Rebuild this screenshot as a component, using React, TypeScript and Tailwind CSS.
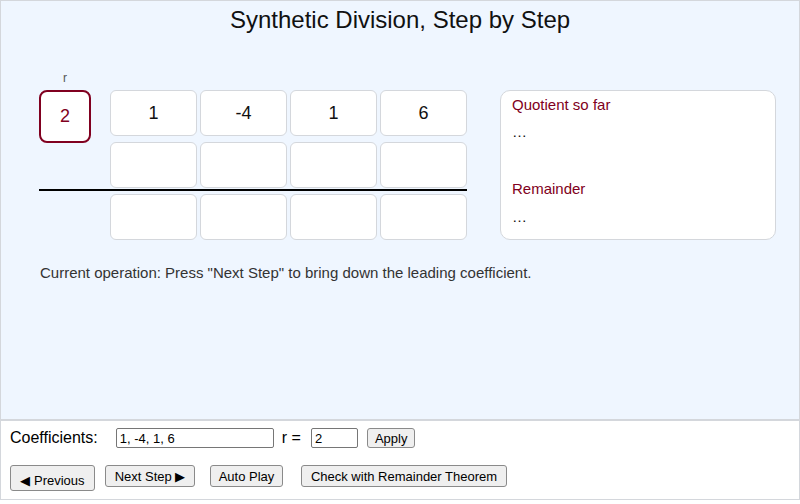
const coefficients = ['1', '-4', '1', '6']
const emptyRow = ['', '', '', '']

const Cell = ({ value }: { value: string }) => (
  <div className="flex h-[46px] w-[87px] items-center justify-center rounded-[6px] border border-[#d4d7dc] bg-white text-[18px] text-[#111]">
    {value}
  </div>
)

const CellRow = ({ values }: { values: string[] }) => (
  <div className="grid grid-cols-[87px_87px_87px_87px] gap-[3px]">
    {values.map((v, i) => (
      <Cell key={i} value={v} />
    ))}
  </div>
)

const Btn = ({ label, className }: { label: string; className?: string }) => (
  <button
    className={
      'rounded-[3px] border border-[#8a8a8a] bg-[#efefef] px-[7px] text-[13px] leading-[15px] text-black ' +
      (className ?? '')
    }
  >
    {label}
  </button>
)

const App = () => {
  return (
    <div className="h-[504px] w-[800px] bg-white font-['Liberation_Sans',Arial,sans-serif]">
      <div className="h-[420px] border border-[#d4d7dc] bg-[#eff6ff]">
        <h1 className="pt-[5px] text-center text-[24px] leading-[28px] text-[#111]">
          Synthetic Division, Step by Step
        </h1>

        <div className="mt-[37px] flex items-start">
          <div className="ml-[38px] w-[428px]">
            <div className="w-[52px] text-center text-[12px] leading-[14px] text-[#555]">r</div>
            <div className="mt-[5px] flex h-[46px] items-start">
              <div className="flex h-[53px] w-[52px] shrink-0 items-center justify-center rounded-[8px] border-2 border-[#800020] bg-white text-[18px] text-[#800020]">
                2
              </div>
              <div className="ml-[19px]">
                <CellRow values={coefficients} />
              </div>
            </div>
            <div className="mt-[6px] ml-[71px]">
              <CellRow values={emptyRow} />
            </div>
            <div className="mt-[1px] h-[2px] bg-black" />
            <div className="mt-[3px] ml-[71px]">
              <CellRow values={emptyRow} />
            </div>
          </div>

          <div className="mt-[19px] ml-[33px] h-[150px] w-[276px] rounded-[10px] border border-[#d4d7dc] bg-white px-[11px] pt-[5px] text-[15px] leading-[18px]">
            <div className="text-[#800020]">Quotient so far</div>
            <div className="mt-[9px] text-[#111]">…</div>
            <div className="mt-[39px] text-[#800020]">Remainder</div>
            <div className="mt-[10px] text-[#111]">…</div>
          </div>
        </div>

        <p className="mt-[24px] ml-[39px] text-[15px] leading-[18px] text-[#333]">
          Current operation: Press "Next Step" to bring down the leading coefficient.
        </p>
      </div>

      <div className="h-[80px] border border-[#d4d7dc] bg-white px-[9px] text-black">
        <div className="mt-[7px] flex h-[20px] items-center">
          <span className="text-[16px] leading-[20px]">Coefficients:</span>
          <input
            defaultValue="1, -4, 1, 6"
            className="ml-[18px] h-[20px] w-[158px] rounded-[2px] border border-[#767676] bg-white px-[3px] text-[13px] leading-[18px] text-black"
          />
          <span className="ml-[8px] text-[16px] leading-[20px]">r =</span>
          <input
            defaultValue="2"
            className="ml-[10px] h-[20px] w-[47px] rounded-[2px] border border-[#767676] bg-white px-[3px] text-[13px] leading-[18px] text-black"
          />
          <Btn label="Apply" className="ml-[9px] h-[20px]" />
        </div>

        <div className="mt-[17px] flex items-start">
          <Btn label="◀ Previous" className="h-[26px] w-[85px] pt-[4px]" />
          <Btn label="Next Step ▶" className="ml-[10px] h-[22px] w-[90px]" />
          <Btn label="Auto Play" className="ml-[15px] h-[22px] w-[73px]" />
          <Btn label="Check with Remainder Theorem" className="ml-[18px] h-[22px] w-[206px]" />
        </div>
      </div>
    </div>
  )
}

export default App
